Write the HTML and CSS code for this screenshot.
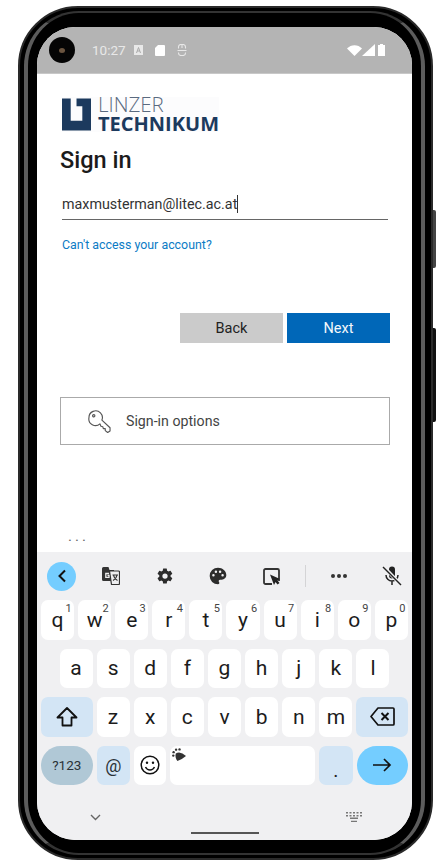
FILE: index.html
```html
<!DOCTYPE html>
<html lang="en">
<head>
  <meta charset="UTF-8">
  <meta name="viewport" content="width=device-width, initial-scale=1.0">
  <title>Sign in</title>
  <link rel="stylesheet" href="styles.css">
</head>
<body>
  <div class="phone">
    <div class="side-btn side-btn-top"></div>
    <div class="side-btn side-btn-bottom"></div>
    <div class="screen">
      <div class="status-bar">
        <div class="camera"><div class="lens"></div></div>
        <span class="time">10:27</span>
        <svg class="st-a" width="9" height="10" viewBox="0 0 9 10"><path fill="#e8e8e8" d="M0 0h9v10H0z"/><path fill="none" stroke="#aaa" stroke-width="1" d="M2.500 8 4.500 2.500 6.500 8M3.200 6h2.600"/></svg>
        <svg class="st-sd" width="10" height="11" viewBox="0 0 10 11"><path fill="#fff" d="M3 0h6a1 1 0 0 1 1 1v9a1 1 0 0 1-1 1H1a1 1 0 0 1-1-1V3z"/></svg>
        <svg class="st-s" width="10" height="12" viewBox="0 0 10 12"><path fill="none" stroke="#e8e8e8" stroke-width="1.100" d="M1.500 4.500V3a2.500 2.500 0 0 1 2.500-2.500h2A2.500 2.500 0 0 1 8.500 3v1.500M0.500 6.500h9M1.500 8.500V9a2.500 2.500 0 0 0 2.500 2.500h2A2.500 2.500 0 0 0 8.500 9v-.5M5 1v3"/></svg>
        <div class="status-right">
          <svg width="15" height="11" viewBox="0 0 15 11"><path fill="#fff" d="M0 3.500C4-1 11-1 15 3.500L7.500 11z"/></svg>
          <svg width="13" height="12" viewBox="0 0 13 12"><path fill="#fff" d="M13 0v12H0z"/></svg>
          <svg class="st-batt" width="7" height="12" viewBox="0 0 7 12"><path fill="#fff" d="M2 0h3v1h2v11H0V1h2z"/></svg>
        </div>
      </div>

      <div class="content">
        <div class="logo">
          <svg class="logo-mark" width="30" height="33" viewBox="0 0 30 33"><path fill="#1c3a5e" d="M0 0h9v23h12V8h-6V0h15v33H0z"/></svg>
          <div class="logo-text">
            <span class="logo-top">LINZER</span>
            <span class="logo-bottom">TECHNIKUM</span>
          </div>
        </div>
        <h1 class="title">Sign in</h1>
        <div class="input"><span>maxmusterman@litec.ac.at</span><i class="caret"></i></div>
        <a class="link">Can't access your account?</a>
        <div class="actions">
          <button class="btn btn-back">Back</button>
          <button class="btn btn-next">Next</button>
        </div>
        <div class="options">
          <svg width="23" height="23" viewBox="0 0 24 24" fill="none" stroke="#555" stroke-width="1.200" stroke-linejoin="round"><path d="M1 8a7 7 0 0 1 12-5 7 7 0 0 1 1.500 7.500l8.500 8v3.500l-2.500 1.500-2.500-2v-2h-2l-.5-2-2-.5-1-2.500A7 7 0 0 1 1 8z"/><circle cx="6" cy="6" r="1.200"/></svg>
          <span>Sign-in options</span>
        </div>
        <div class="dots">...</div>
      </div>

      <div class="keyboard">
        <div class="toolbar">
          <div class="tool-back"><svg width="10" height="14" viewBox="0 0 10 14" fill="none" stroke="#111" stroke-width="2"><path d="M8 1.500 2.500 7 8 12.500"/></svg></div>
          <div class="tool tool-first"><svg width="18" height="18" viewBox="0 0 18 18"><path fill="#333" d="M0 1.500A1.500 1.500 0 0 1 1.500 0h5l1 3H12v11H1.500A1.500 1.500 0 0 1 0 12.500z"/><path fill="#eeeef0" stroke="#333" stroke-width="1.200" d="M7.500 4h9a1 1 0 0 1 1 1v11.500a1 1 0 0 1-1 1H9.500z"/><path fill="none" stroke="#eee" stroke-width="1.300" d="M7 6.500H3.800v3.800H7V8.300H5.500"/><path fill="none" stroke="#333" stroke-width="1.100" d="M10.500 8h5.500M11.500 8c.5 2.500 2 4.500 4 5.500M15 8c-.5 2.500-2 4.500-4 5.500"/></svg></div>
          <div class="tool"><svg width="18" height="18" viewBox="0 0 24 24"><path fill="#2c2c2c" d="M19.400 13a7.500 7.500 0 0 0 0-2l2.100-1.600a.5.500 0 0 0 .1-.6l-2-3.500a.5.500 0 0 0-.6-.2l-2.500 1a7.500 7.500 0 0 0-1.700-1L14.400 2.400a.5.500 0 0 0-.5-.4h-4a.5.500 0 0 0-.5.400L9 5.100a7.500 7.500 0 0 0-1.700 1l-2.500-1a.5.500 0 0 0-.6.200l-2 3.500a.5.500 0 0 0 .1.600L4.400 11a7.500 7.500 0 0 0 0 2l-2.100 1.600a.5.500 0 0 0-.1.600l2 3.500a.5.500 0 0 0 .6.200l2.500-1a7.500 7.500 0 0 0 1.700 1l.4 2.700a.5.500 0 0 0 .5.400h4a.5.500 0 0 0 .5-.4l.4-2.700a7.500 7.500 0 0 0 1.700-1l2.500 1a.5.500 0 0 0 .6-.2l2-3.500a.5.500 0 0 0-.1-.6zM12 15.500a3.500 3.500 0 1 1 0-7 3.500 3.500 0 0 1 0 7z"/></svg></div>
          <div class="tool"><svg width="20" height="20" viewBox="0 0 24 24"><path fill="#2c2c2c" d="M12 2a10 10 0 0 0 0 20 1.700 1.700 0 0 0 1.200-2.800 1.700 1.700 0 0 1 1.300-2.800h2A5.500 5.500 0 0 0 22 11C22 6 17.500 2 12 2zM6.500 12.500a1.500 1.500 0 1 1 0-3 1.500 1.500 0 0 1 0 3zm3-4a1.500 1.500 0 1 1 0-3 1.500 1.500 0 0 1 0 3zm5 0a1.500 1.500 0 1 1 0-3 1.500 1.500 0 0 1 0 3zm3 4a1.500 1.500 0 1 1 0-3 1.500 1.500 0 0 1 0 3z"/></svg></div>
          <div class="tool"><svg width="17" height="17" viewBox="0 0 17 17"><path fill="none" stroke="#333" stroke-width="1.800" d="M2.500 1h12A1.500 1.500 0 0 1 16 2.500V13M9 16H2.500A1.500 1.500 0 0 1 1 14.500v-12A1.500 1.500 0 0 1 2.500 1"/><path fill="#222" d="M7 6.500l10 4.500-2.500 1.500 2 2.500-2 1.500-2-2.500L11 17z"/></svg></div>
          <div class="tool-sep-slot"><div class="tool-sep"></div></div>
          <div class="tool tool-dots"><svg width="18" height="6" viewBox="0 0 18 6"><g fill="#333"><circle cx="3" cy="3" r="2"/><circle cx="9" cy="3" r="2"/><circle cx="15" cy="3" r="2"/></g></svg></div>
          <div class="tool tool-mic"><svg width="20" height="20" viewBox="0 0 20 20"><path fill="#222" d="M7 3.500a3 3 0 0 1 6 0v6a3 3 0 0 1-6 0z"/><path fill="none" stroke="#222" stroke-width="1.500" d="M4 9a6 6 0 0 0 12 0M10 15v4"/><path stroke="#f0f0f2" stroke-width="3.400" d="M1 0l18 19"/><path stroke="#222" stroke-width="1.500" d="M1 1l18 18"/></svg></div>
        </div>

        <div class="keys">
          <div class="key-row">
            <div class="key">q<sup>1</sup></div>
            <div class="key">w<sup>2</sup></div>
            <div class="key">e<sup>3</sup></div>
            <div class="key">r<sup>4</sup></div>
            <div class="key">t<sup>5</sup></div>
            <div class="key">y<sup>6</sup></div>
            <div class="key">u<sup>7</sup></div>
            <div class="key">i<sup>8</sup></div>
            <div class="key">o<sup>9</sup></div>
            <div class="key">p<sup>0</sup></div>
          </div>
          <div class="key-row key-row-mid">
            <div class="key">a</div>
            <div class="key">s</div>
            <div class="key">d</div>
            <div class="key">f</div>
            <div class="key">g</div>
            <div class="key">h</div>
            <div class="key">j</div>
            <div class="key">k</div>
            <div class="key">l</div>
          </div>
          <div class="key-row">
            <div class="key key-fn key-wide"><svg width="22" height="20" viewBox="0 0 22 20" fill="none" stroke="#111" stroke-width="1.800" stroke-linejoin="round"><path d="M11 1 1.500 10.500H6.500V18.500H15.500V10.500H20.500z"/></svg></div>
            <div class="key">z</div>
            <div class="key">x</div>
            <div class="key">c</div>
            <div class="key">v</div>
            <div class="key">b</div>
            <div class="key">n</div>
            <div class="key">m</div>
            <div class="key key-fn key-wide"><svg width="25" height="19" viewBox="0 0 25 19" fill="none" stroke="#111" stroke-width="1.700" stroke-linejoin="round"><path d="M8 1h15a1 1 0 0 1 1 1v15a1 1 0 0 1-1 1H8L1 9.500z"/><path stroke-width="2" d="m11.500 6 7 7M18.500 6l-7 7"/></svg></div>
          </div>
          <div class="key-row">
            <div class="key key-wide key-sym">?123</div>
            <div class="key key-fn key-at">@</div>
            <div class="key"><svg width="20" height="20" viewBox="0 0 20 20" fill="none" stroke="#111" stroke-width="1.500"><circle cx="10" cy="10" r="8.800"/><circle cx="7" cy="7.800" r="1.200" fill="#111" stroke="none"/><circle cx="13" cy="7.800" r="1.200" fill="#111" stroke="none"/><path d="M5.500 12c1 2 2.700 3 4.500 3s3.500-1 4.500-3"/></svg></div>
            <div class="key key-space"><svg class="paw" width="14" height="13" viewBox="0 0 13 12"><g fill="#333"><path d="M3.500 5Q8 2.500 13 7.500 9 11 5 12 2.500 8.500 3.500 5z"/><circle cx="1.200" cy="7" r="1.100"/><circle cx="1.500" cy="3.800" r="1.100"/><circle cx="3.800" cy="1.500" r="1.100"/><circle cx="7" cy="1.300" r="1.100"/></g></svg></div>
            <div class="key key-fn key-dot"><i class="dot-mark">.</i></div>
            <div class="key key-wide key-enter"><svg width="19" height="14" viewBox="0 0 19 14" fill="none" stroke="#111" stroke-width="1.700"><path d="M0 7h17M11 1l6 6-6 6"/></svg></div>
          </div>
        </div>

        <div class="nav">
          <svg width="11" height="7" viewBox="0 0 11 7" fill="none" stroke="#666" stroke-width="1.400"><path d="m1 1 4.500 4.500L10 1"/></svg>
          <svg width="16" height="10" viewBox="0 0 16 10"><g fill="#777"><path d="M0 0h2v1.500H0zM3.500 0h2v1.500h-2zM7 0h2v1.500H7zM10.500 0h2v1.500h-2zM14 0h2v1.500h-2zM0 3h2v1.500H0zM3.500 3h2v1.500h-2zM7 3h2v1.500H7zM10.500 3h2v1.500h-2zM14 3h2v1.500h-2zM4 5.500h8V7H4zM5 8.800h6V10H5z"/></g></svg>
        </div>
        <div class="home-bar"></div>
      </div>
    </div>
  </div>
</body>
</html>
```

FILE: styles.css
```css
html, body {
  width: 100%;
  height: 100%;
  overflow: hidden;
}

body {
  font-family: 'Roboto', 'Liberation Sans', sans-serif;
  margin: 0;
  padding: 0;
  background-color: #fff;
}

.phone {
  position: relative;
  box-sizing: border-box;
  width: 415px;
  height: 854px;
  margin: 6px 0 0 18px;
  padding: 19px 19px 18px 17px;
  background-color: #000;
  border: 2px solid #2a2a2a;
  border-radius: 60px;
}

/* sheen on the bezel */
.phone::before {
  content: '';
  position: absolute;
  top: 3px;
  right: 6px;
  bottom: 3px;
  left: 4px;
  border-style: solid;
  border-width: 2px 4px;
  border-color: #333 #5c5c5c;
  border-radius: 55px;
  filter: blur(0.7px);
}

.side-btn {
  position: absolute;
  right: -5px;
  width: 3px;
  border-radius: 0 2px 2px 0;
}

.side-btn-top {
  top: 202px;
  height: 58px;
  background-color: #444;
}

.side-btn-bottom {
  top: 320px;
  height: 94px;
  background-color: #111;
}

.screen {
  position: relative;
  display: flex;
  flex-direction: column;
  width: 375px;
  height: 813px;
  overflow: hidden;
  background-color: #fff;
  border-radius: 38px;
}

/* status bar */
.status-bar {
  display: flex;
  align-items: center;
  flex: 0 0 47px;
  padding: 0 27px 0 12px;
  background-color: #b4b4b4;
  border-bottom: 1px solid #c8c8c8;
  box-sizing: border-box;
}

.camera {
  display: flex;
  align-items: center;
  justify-content: center;
  width: 26px;
  height: 26px;
  background-color: #050505;
  border-radius: 50%;
}

.lens {
  width: 6px;
  height: 5px;
  background-color: #6b5540;
  border-radius: 50%;
}

.time {
  margin-left: 17px;
  font-size: 13.500px;
  color: #e8e8e8;
}

.st-a {
  margin-left: 8px;
}

.st-sd {
  margin-left: 12px;
}

.st-s {
  margin-left: 12px;
}

.status-right {
  display: flex;
  align-items: center;
  margin-left: auto;
}

.st-batt {
  margin-left: 3px;
}

/* sign in form */
.content {
  flex: 1;
  padding: 23px 22px 0 23px;
  color: #1b1b1b;
}

.logo {
  display: flex;
  align-items: center;
  gap: 7px;
  width: 157px;
  height: 35px;
  margin-left: 2px;
  background-color: #fcfcfd;
}

.logo-text {
  display: flex;
  flex-direction: column;
  margin-top: -1px;
  font-family: 'Open Sans', sans-serif;
  color: #1c3a5e;
  line-height: 19px;
}

.logo-top {
  font-size: 20.500px;
  font-weight: 300;
  color: #5a6a80;
}

.logo-bottom {
  font-size: 20px;
  font-weight: 700;
}

.title {
  margin: 13px 0 0;
  font-size: 23.500px;
  font-weight: 500;
  line-height: 30px;
}

.input {
  display: flex;
  align-items: center;
  height: 30px;
  margin: 14px 2px 0 2px;
  font-size: 14.300px;
  color: #333;
  border-bottom: 1px solid #666;
}

.caret {
  width: 1px;
  height: 18px;
  background-color: #333;
}

.link {
  display: block;
  margin: 17px 0 0 2px;
  font-size: 12.400px;
  line-height: 16px;
  color: #0c7bc5;
}

.actions {
  display: flex;
  justify-content: flex-end;
  gap: 4px;
  margin-top: 60px;
}

.btn {
  width: 103px;
  height: 30px;
  padding: 0;
  font-family: inherit;
  font-size: 14.500px;
  border: none;
}

.btn-back {
  background-color: #cbcbcb;
  color: #222;
}

.btn-next {
  background-color: #0067b8;
  color: #f4f8fb;
}

.options {
  display: flex;
  align-items: center;
  gap: 15px;
  height: 46px;
  margin-top: 54px;
  padding-left: 27px;
  font-size: 14.200px;
  color: #444;
  border: 1px solid #aaa;
}

.dots {
  margin: 83px 0 0 8px;
  font-size: 15px;
  line-height: 16px;
  letter-spacing: 3px;
  color: #666;
}

/* keyboard */
.keyboard {
  flex: 0 0 288px;
  background-color: #f0f0f2;
}

.toolbar {
  display: flex;
  align-items: center;
  height: 48px;
  padding-left: 10px;
}

.tool-back {
  display: flex;
  flex: none;
  align-items: center;
  justify-content: center;
  width: 29px;
  height: 29px;
  background-color: #74cdff;
  border-radius: 50%;
}

.tool {
  display: flex;
  flex: none;
  align-items: center;
  justify-content: center;
  width: 53.500px;
}

.tool-first {
  margin-left: 8.250px;
}

.tool-sep-slot {
  display: flex;
  flex: none;
  justify-content: center;
  width: 13.500px;
}

.tool-sep {
  width: 1px;
  height: 22px;
  background-color: #d4d4d6;
}

.tool-dots {
  width: 54.500px;
  margin-left: 0;
}

.tool-mic {
  width: 53px;
  margin-left: -1px;
}

.keys {
  display: flex;
  flex-direction: column;
  gap: 9px;
  padding: 0 4px;
}

.key-row {
  display: flex;
  gap: 4px;
  height: 39.500px;
}

.key-row-mid {
  padding: 0 18.500px;
}

.key {
  position: relative;
  display: flex;
  align-items: center;
  justify-content: center;
  flex: 1 1 0;
  min-width: 0;
  font-size: 21px;
  color: #1c1c1c;
  background-color: #fff;
  border-radius: 7px;
}

.key sup {
  position: absolute;
  top: 3px;
  right: 2.500px;
  font-size: 11px;
  line-height: 12px;
  color: #444;
}

.key-fn {
  background-color: #d3e5f5;
}

.key-wide {
  flex: 0 0 51.500px;
}

.key-sym {
  font-size: 13.500px;
  background-color: #b0c8d6;
  border-radius: 20px;
  color: #2a3238;
}

.key-at {
  flex: 0 0 33.500px;
  font-size: 18px;
  color: #2a3238;
}

.key-space {
  flex: 0 0 145px;
}

.key-dot {
  flex: 0 0 33.500px;
}

.dot-mark {
  margin-top: 14px;
  font-size: 14px;
  font-style: normal;
  font-weight: 700;
  line-height: 14px;
}

.key-enter {
  background-color: #74cdff;
  border-radius: 20px;
}

.paw {
  position: absolute;
  top: 2px;
  left: 2px;
}

.nav {
  display: flex;
  align-items: center;
  justify-content: space-between;
  height: 12px;
  margin-top: 26px;
  padding: 0 50px 0 53px;
}

.home-bar {
  width: 68px;
  height: 2px;
  margin: 9px auto 0;
  background-color: #555;
}
```
